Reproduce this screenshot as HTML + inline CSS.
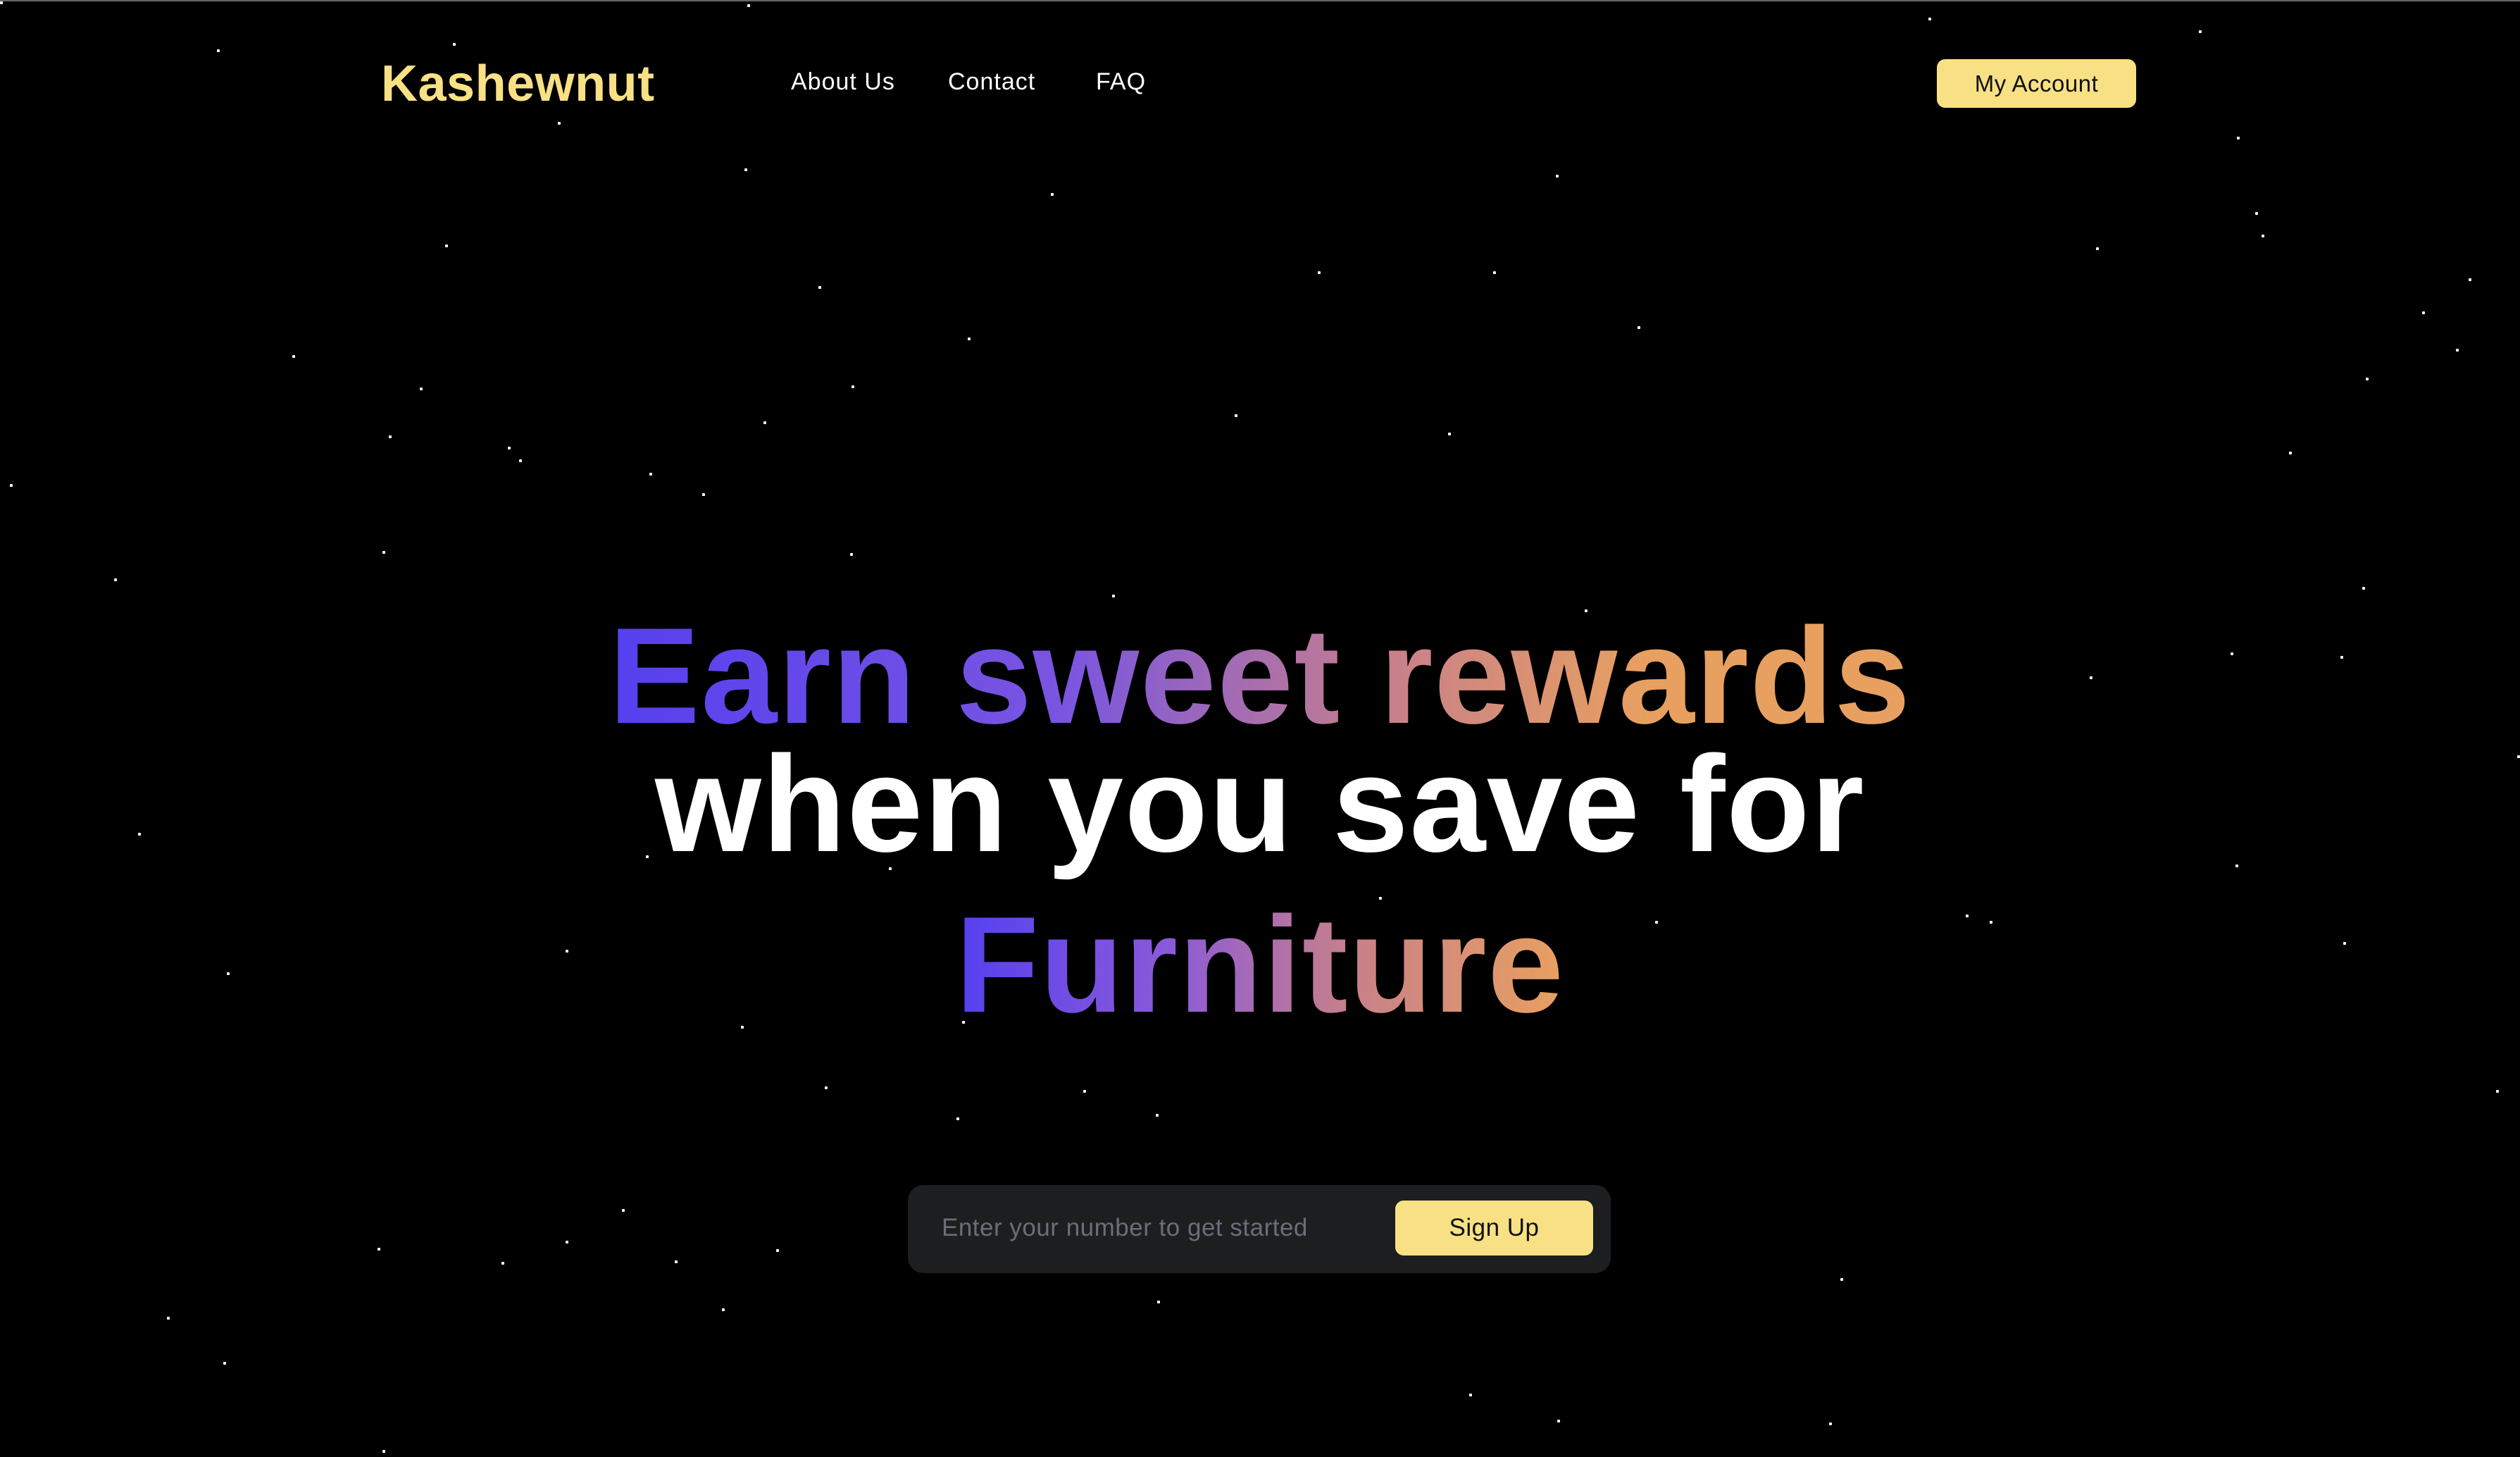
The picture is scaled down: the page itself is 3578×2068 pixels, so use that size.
<!DOCTYPE html>
<html><head><meta charset="utf-8">
<style>
html,body{margin:0;padding:0;}
body{width:3578px;height:2068px;background:#000;position:relative;overflow:hidden;font-family:"Liberation Sans",sans-serif;border-top:2px solid #666;box-sizing:border-box;}
.star{position:absolute;left:0;top:0;width:4px;height:4px;background:#fff;border-radius:1px;}
.logo{position:absolute;left:541px;top:76px;font-size:72px;font-weight:bold;color:#f8e184;letter-spacing:0.5px;}
.nav{position:absolute;top:95px;font-size:34px;color:#fff;letter-spacing:1px;}
.acct{position:absolute;left:2750px;top:82px;width:283px;height:69px;background:#f8e184;border-radius:12px;color:#111;font-size:33px;line-height:69px;text-align:center;letter-spacing:0.5px;}
.h{position:absolute;left:0;width:3578px;text-align:center;font-weight:bold;font-size:194px;letter-spacing:1.5px;line-height:1;}
.g{background:linear-gradient(90deg,#5540f0 0%,#7a55e0 35%,#c8808a 60%,#e8a060 80%,#e8a060 100%);-webkit-background-clip:text;background-clip:text;color:transparent;}
.box{position:absolute;left:1289px;top:1680px;width:998px;height:125px;background:#1d1e20;border-radius:22px;}
.ph{position:absolute;left:48px;top:41px;font-size:35px;color:#6b6e78;letter-spacing:0.5px;}
.btn{position:absolute;left:692px;top:22px;width:281px;height:78px;background:#f8e184;border-radius:12px;font-size:35px;color:#111;text-align:center;line-height:78px;letter-spacing:0.5px;}
</style></head><body>
<div class="star" style="box-shadow:
308px 68px #fff,643px 59px #fff,1061px 4px #fff,2738px 23px #fff,3122px 41px #fff,1057px 237px #fff,1492px 272px #fff,2209px 246px #fff,3176px 192px #fff,3202px 299px #fff,3211px 331px #fff,632px 345px #fff,2976px 349px #fff,1162px 404px #fff,1871px 383px #fff,2120px 383px #fff,3505px 393px #fff,3439px 440px #fff,415px 502px #fff,1374px 477px #fff,2325px 461px #fff,3487px 493px #fff,596px 548px #fff,1209px 545px #fff,3359px 534px #fff,1084px 596px #fff,1753px 586px #fff,2056px 612px #fff,552px 616px #fff,721px 632px #fff,737px 650px #fff,3250px 639px #fff,922px 669px #fff,14px 685px #fff,997px 698px #fff,543px 780px #fff,1207px 783px #fff,162px 819px #fff,1579px 842px #fff,3354px 831px #fff,2250px 863px #fff,3167px 924px #fff,3323px 929px #fff,2967px 958px #fff,3574px 1070px #fff,196px 1180px #fff,917px 1212px #fff,3174px 1225px #fff,1958px 1271px #fff,2350px 1305px #fff,2791px 1296px #fff,2825px 1305px #fff,803px 1346px #fff,322px 1378px #fff,3327px 1335px #fff,1052px 1454px #fff,1171px 1540px #fff,1538px 1545px #fff,3544px 1545px #fff,1358px 1584px #fff,1641px 1579px #fff,883px 1714px #fff,803px 1759px #fff,536px 1769px #fff,1102px 1771px #fff,712px 1789px #fff,958px 1787px #fff,2613px 1812px #fff,1025px 1855px #fff,1643px 1844px #fff,237px 1867px #fff,317px 1931px #fff,2086px 1976px #fff,2211px 2013px #fff,2597px 2017px #fff,543px 2056px #fff,792px 171px #fff,1262px 1229px #fff,1366px 1447px #fff;"></div>
<div class="logo">Kashewnut</div>
<div class="nav" style="left:1123px">About Us</div>
<div class="nav" style="left:1346px">Contact</div>
<div class="nav" style="left:1556px">FAQ</div>
<div class="acct">My Account</div>
<div class="h" style="top:861px"><span class="g">Earn sweet rewards</span></div>
<div class="h" style="top:1043px;color:#fff">when you save for</div>
<div class="h" style="top:1271px"><span class="g" style="background:linear-gradient(90deg,#5540f0 0%,#8a5ad8 35%,#c8808a 65%,#e8a060 100%);-webkit-background-clip:text;background-clip:text;">Furniture</span></div>
<div class="box"><div class="ph">Enter your number to get started</div><div class="btn">Sign Up</div></div>
</body></html>
